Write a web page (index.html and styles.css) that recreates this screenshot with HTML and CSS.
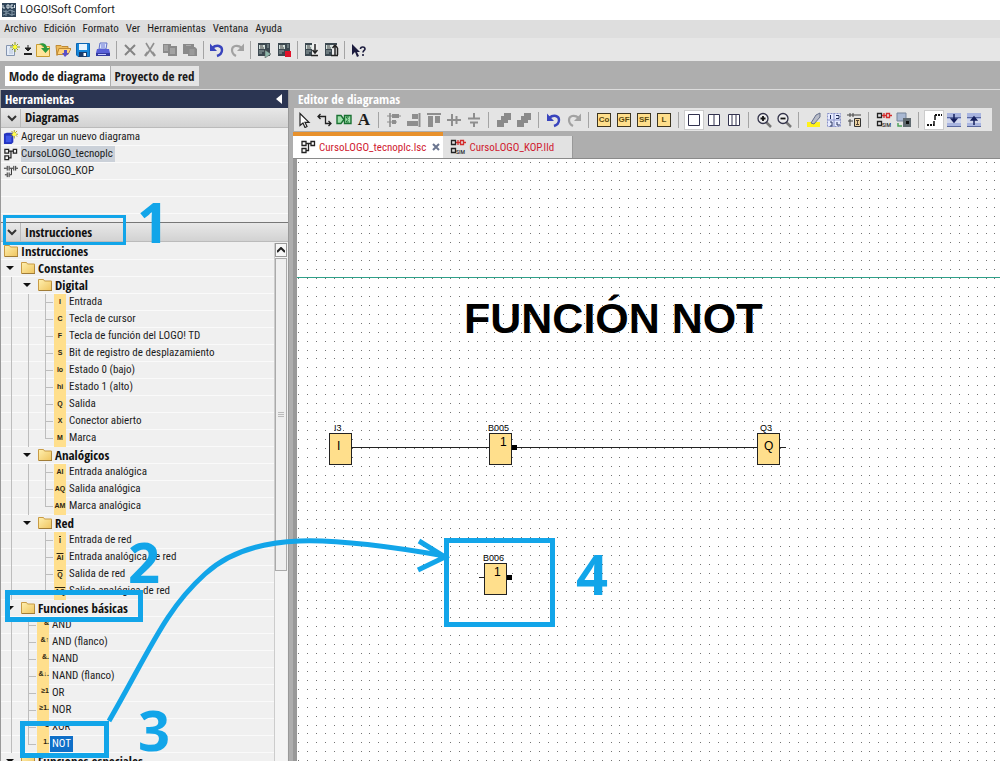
FILE: index.html
```
<!DOCTYPE html>
<html lang="es">
<head>
<meta charset="utf-8">
<title>LOGO!Soft Comfort</title>
<link rel="stylesheet" href="styles.css">
</head>
<body>
<svg class="defs" aria-hidden="true">
  <defs>
    <linearGradient id="fold" x1="0" y1="0" x2="1" y2="1"><stop offset="0" stop-color="#fff0b0"/><stop offset="1" stop-color="#efc45e"/></linearGradient>
    <symbol id="folder" viewBox="0 0 14 12"><path d="M.5 .5h5l1 1.500h7v9.500H.5z" fill="url(#fold)" stroke="#c89b45"/><path d="M1 11.500h13v-8" fill="none" stroke="#a07c38"/></symbol>
    <symbol id="new" viewBox="0 0 16 16"><path d="M2.500 3.500h8v10h-8z" fill="#e4ecf8" stroke="#8595b0"/><path d="M5 7h4M5 9h4M5 11h4" stroke="#b4c2d8"/><path d="M11 0v10M6 5h10M8 2l6 6M14 2l-6 6" stroke="#8c9a20"/><circle cx="11" cy="5" r="2" fill="#ffff30"/></symbol>
    <symbol id="down" viewBox="0 0 10 12"><path d="M5 1v4M2 4h6L5 7z" stroke="#222" fill="#222"/><path d="M1 10h8" stroke="#222" stroke-width="2"/></symbol>
    <symbol id="open" viewBox="0 0 16 16"><path d="M1.500 2.500h5l1 2h7v10h-13z" fill="#ffe49a" stroke="#c99b32"/><path d="M4 2c5-2 8 1 8 4h3l-4.500 5L6 6h3c0-2-2-3-5-4z" fill="#2b9a3e"/></symbol>
    <symbol id="opens" viewBox="0 0 16 16"><path d="M1 3.500h5l1 1h6v2H4l-2 7z" fill="#eebc5c" stroke="#c08a35"/><path d="M4 6.500h12l-3 6H2z" fill="#ffd27a" stroke="#c08a35"/><path d="M10 15l-3-4h2V8h3v3h2z" fill="#5a50c8"/></symbol>
    <symbol id="save" viewBox="0 0 16 16"><path d="M1.500 1.500h13v13H3l-1.500-1.500z" fill="#1686d8" stroke="#0d66b4"/><path d="M4 2h8v6H4z" fill="#e8f5ff"/><path d="M4 10h8v5H4z" fill="#1a3c6c"/><path d="M8.500 11h2.500v3H8.500z" fill="#fff"/></symbol>
    <symbol id="print" viewBox="0 0 16 16"><path d="M5 1h7l-1 6H4z" fill="#dfe7ff" stroke="#5f70c8"/><path d="M6 3h4M6 5h4" stroke="#6775d0"/><path d="M2 7h12l1 4H1z" fill="#5960d8"/><path d="M1 11h14v3H1z" fill="#343aa0"/><path d="M3 12.500h8" stroke="#c6cbff"/></symbol>
    <symbol id="del" viewBox="0 0 16 16"><path d="M3 3l10 10M13 3L3 13" stroke="#848484" stroke-width="2"/></symbol>
    <symbol id="cut" viewBox="0 0 16 16"><path d="M4 1l6 10M12 1L6 11" stroke="#8f8f8f" stroke-width="1.600"/><path d="M6 10l-3 4M10 10l3 4" fill="none" stroke="#8f8f8f" stroke-width="2.500"/></symbol>
    <symbol id="copy" viewBox="0 0 16 16"><path d="M1 2h8v9H1zM6 4h9v10H6z" fill="#8a8a8a"/><path d="M2 4h4M2 6h4M2 8h4M8 7h5M8 9h5M8 11h5" stroke="#bbb"/></symbol>
    <symbol id="paste" viewBox="0 0 16 16"><path d="M1 2h11v10H1zM6 5h7l2 2v7H6z" fill="#8a8a8a"/><path d="M7.500 8h5M7.500 10h5M7.500 12h5M4 3.500h5" stroke="#aaa"/></symbol>
    <symbol id="undo" viewBox="0 0 16 16"><path d="M3 6c5-4 10-2 10 2 0 3-2 5-5 6" fill="none" stroke="#3944bd" stroke-width="2.400"/><path d="M1 1.500V9h7z" fill="#3944bd"/></symbol>
    <symbol id="redo" viewBox="0 0 16 16"><path d="M13 6C8 2 3 4 3 8c0 3 2 5 4 6" fill="none" stroke="#a2a2a2" stroke-width="2.200"/><path d="M15 1.500V9H8z" fill="#a2a2a2"/></symbol>
    <symbol id="plc" viewBox="0 0 16 16"><path d="M2 1h12v13H2z" fill="#3c4850"/><path d="M3 3h6v4H3z" fill="#d3e0dc"/><path d="M4 4h3M4 6h4" stroke="#444"/><path d="M3 9h5M3 11h3M11 3h2M11 5h2" stroke="#9cabab"/></symbol>
    <symbol id="start" viewBox="0 0 16 16"><use href="#plc"/><path d="M9 8l6 4-6 4z" fill="#8fb7ab" stroke="#555" stroke-width=".5"/></symbol>
    <symbol id="stop" viewBox="0 0 16 16"><use href="#plc"/><path d="M9 9h6v6H9z" fill="#e0122a"/></symbol>
    <symbol id="todev" viewBox="0 0 16 16"><use href="#plc"/><path d="M9 1h6v13H9z" fill="#eee"/><path d="M12 2v8M9.500 8l2.500 3 2.500-3M8 13.500h7" stroke="#222" stroke-width="1.500" fill="none"/></symbol>
    <symbol id="fromdev" viewBox="0 0 16 16"><use href="#plc"/><path d="M9 3h6v11H9z" fill="#eee"/><path d="M12 13V4M9.500 6L12 3l2.500 3M8 13.500h7M14.500 6v7" stroke="#222" stroke-width="1.500" fill="none"/></symbol>
    <symbol id="help" viewBox="0 0 16 16"><path d="M2 2v11l3-3 2 5 2-1-2-4h3z" fill="#1c1c3e"/><path d="M10.500 7c0-3 4.500-2.500 4.500 0 0 1.500-2 1.500-2 3.500M13 12v2" fill="none" stroke="#1c1c3e" stroke-width="1.600"/></symbol>
    <symbol id="pointer" viewBox="0 0 16 16"><path d="M4 1.500v12L7 11l2 4.500 2-1-2-4.200h4z" fill="#fff" stroke="#222" stroke-width="1.200"/></symbol>
    <symbol id="wire" viewBox="0 0 16 16"><path d="M2 4.500h7.500v7H15M4.500 2L2 4.500 4.500 7M12.500 9l2.500 2.500-2.500 2.500" stroke="#222" stroke-width="1.300" fill="none"/></symbol>
    <symbol id="dx" viewBox="0 0 16 16"><path d="M1 3.500h4l3 4-3 4H1zM8.500 3.500H15v8H8.500z" fill="#9fe0ab" stroke="#1a7132" stroke-width="1.400"/><path d="M13 5h-3l2 2.500-2 2.500h3" stroke="#1a7132" fill="none"/></symbol>
    <symbol id="al" viewBox="0 0 16 16"><path d="M4 1v14" stroke="#8e8e8e" stroke-width="1.600"/><path d="M1 4h14M1 10h10" stroke="#8e8e8e"/><path d="M6 2h7v4H6zM6 8h4v4H6z" fill="#8e8e8e"/></symbol>
    <symbol id="ar" viewBox="0 0 16 16"><path d="M13.500 1v14" stroke="#8e8e8e" stroke-width="2"/><path d="M6 2h6v5H6zM1 9h11v5H1z" fill="#8e8e8e"/></symbol>
    <symbol id="at" viewBox="0 0 16 16"><path d="M1 2h14" stroke="#8e8e8e" stroke-width="2"/><path d="M2 4h5v11H2zM9 4h5v7H9z" fill="#8e8e8e"/></symbol>
    <symbol id="ah" viewBox="0 0 16 16"><path d="M1 8h14M6 2v12M10.500 4v8" stroke="#8e8e8e" stroke-width="2"/></symbol>
    <symbol id="av" viewBox="0 0 16 16"><path d="M8 1v5M8 10v5M2 6.500h12M4 10.500h8" stroke="#8e8e8e" stroke-width="2"/></symbol>
    <symbol id="front" viewBox="0 0 16 16"><path d="M8 1h7v7H8zM5 4h7v7H5zM1 8h7v7H1z" fill="#8a8a8a"/></symbol>
    <symbol id="w1" viewBox="0 0 16 16"><path d="M2.500 2.500h11v11h-11z" fill="#fff" stroke="#32324e"/></symbol>
    <symbol id="w2" viewBox="0 0 16 16"><path d="M2.500 2.500h11v11h-11zM8 2v12" fill="#fff" stroke="#32324e"/></symbol>
    <symbol id="w3" viewBox="0 0 16 16"><path d="M2.500 2.500h11v11h-11zM6 2v12M10 2v12" fill="#fff" stroke="#32324e"/></symbol>
    <symbol id="zin" viewBox="0 0 16 16"><path d="M10 10l5 5" stroke="#777" stroke-width="2.500"/><circle cx="7" cy="6.500" r="5" fill="#eee" stroke="#33334a" stroke-width="1.300"/><path d="M4.500 6.500h5M7 4v5" stroke="#111" stroke-width="1.800"/></symbol>
    <symbol id="zout" viewBox="0 0 16 16"><path d="M10 10l5 5" stroke="#777" stroke-width="2.500"/><circle cx="7" cy="6.500" r="5" fill="#eee" stroke="#33334a" stroke-width="1.300"/><path d="M4.500 6.500h5" stroke="#111" stroke-width="1.800"/></symbol>
    <symbol id="mark" viewBox="0 0 16 16"><path d="M1 10h13v5H1z" fill="#fff21a"/><path d="M5 11l5-8 4-2v4l-6 7z" fill="#b8bcc8" stroke="#66708c"/></symbol>
    <symbol id="pages" viewBox="0 0 16 16"><path d="M1.500 1.500h13v13h-13z" fill="#e6ebff" stroke="#8a93c8" stroke-dasharray="2 1"/><path d="M8 1v14M1 8h14" stroke="#8a93c8"/><path d="M4.500 3v4M10 3.500h3v3h-3M4 10h2v4H4M11 10v3h3" stroke="#25305e" fill="none"/></symbol>
    <symbol id="conv" viewBox="0 0 16 16"><path d="M1 3h14M4 1v4M7 1v4M2 9h5M4 7v7" stroke="#444"/><path d="M8.500 6.500h6v8h-6z" fill="#edd3a2" stroke="#333"/><path d="M11.500 8v5M10 8.500h3M10 12.500h3" stroke="#543"/></symbol>
    <symbol id="fbd" viewBox="0 0 16 16"><path d="M2 2.500h4v4H2zM2 9.500h4v4H2zM11 2.500h3.500v4H11zM6 4.500h5M6 11.500h2.500v-7" fill="none" stroke="#222" stroke-width="1.300"/></symbol>
    <symbol id="lad" viewBox="0 0 16 16"><path d="M1 4.500h3M4.500 2v5M6.500 2v5M7 4.500h4M11.500 2v5M13.500 2v5M14 4.500h2M9 5v6.500H7M2 11.500h2M4.500 9v5M6.500 9v5" stroke="#222" fill="none"/></symbol>
    <symbol id="sim" viewBox="0 0 16 16"><path d="M1.500 1.500h4v4h-4zM1.500 9.500h4v4h-4z" fill="none" stroke="#222" stroke-width="1.300"/><path d="M6 3.500h4M14 3.500h2M8 1v5M10.500 1.500h3v4h-3z" stroke="#d22c2c" stroke-width="1.300" fill="none"/><text x="6" y="15" font-size="6">SIM</text></symbol>
    <symbol id="net" viewBox="0 0 16 16"><path d="M1 1h9v8H1z" fill="#a9b8d2" stroke="#76859b"/><path d="M7 6h8v9H7z" fill="#606a70"/><path d="M10 9h3v3h-3z" fill="#111"/><path d="M2 11v3h4" stroke="#4fa35b" fill="none" stroke-width="1.500"/></symbol>
    <symbol id="ref" viewBox="0 0 16 16"><path d="M1 13h7" stroke="#111" stroke-width="2" stroke-dasharray="2 1"/><path d="M8 14V9M9 8V3" stroke="#111" stroke-width="1.500"/><path d="M9 3h7" stroke="#111" stroke-width="2" stroke-dasharray="2 1"/></symbol>
    <symbol id="dn" viewBox="0 0 16 16"><path d="M1 1h14v14H1z" fill="#a9b5e0"/><path d="M1 7h14v4H1z" fill="#d2d8ee"/><path d="M1 14.500h14M1 5.500h14" stroke="#5968a0"/><path d="M8 2v6M5.500 7h5L8 10z" stroke="#16205e" fill="#16205e" stroke-width="1.500"/></symbol>
    <symbol id="up" viewBox="0 0 16 16"><path d="M1 1h14v14H1z" fill="#a9b5e0"/><path d="M1 7h14v4H1z" fill="#d2d8ee"/><path d="M1 14.500h14M1 5.500h14" stroke="#5968a0"/><path d="M8 13V8M5.500 8h5L8 5z" stroke="#16205e" fill="#16205e" stroke-width="1.500"/></symbol>
    <symbol id="add" viewBox="0 0 16 16"><path d="M1 4l3-1h7v10l-2 2H1z" fill="#2434c0"/><path d="M3 6h6v7H3z" fill="#3f57e8"/><path d="M12 0v9M8 4.500h8M9 1l6 6M15 1L9 7" stroke="#a89a20"/><circle cx="12" cy="4.500" r="2" fill="#ffff50"/></symbol>
    <symbol id="chev" viewBox="0 0 10 8"><path d="M1 2l4 4 4-4" fill="none" stroke="#333" stroke-width="2"/></symbol>
    <symbol id="tri" viewBox="0 0 8 8"><path d="M0 2h8L4 6z" fill="#111"/></symbol>
    <symbol id="logo" viewBox="0 0 14 14"><path d="M0 0h14v14H0z" fill="#31465a"/><path d="M1 2v3h2M5 2h2v3H5zM9 2h2M9 2v3h2V4M12.500 2v3" stroke="#dfe8ee" fill="none"/><path d="M1 8l4 1 3-2 5 2M1 12l5-2 3 2 4-1M4 7v6M10 7v6" stroke="#8296a6" fill="none"/></symbol>
  </defs>
</svg>

<div class="app">
  <header class="titlebar"><svg width="14" height="14"><use href="#logo"/></svg><span>LOGO!Soft Comfort</span></header>
  <nav class="menu">
    <button>Archivo</button><button>Edición</button><button>Formato</button><button>Ver</button><button>Herramientas</button><button>Ventana</button><button>Ayuda</button>
  </nav>
  <div class="toolbar">
    <button aria-label="Nuevo"><svg><use href="#new"/></svg></button><button class="slim" aria-label="Más"><svg><use href="#down"/></svg></button><button aria-label="Abrir"><svg><use href="#open"/></svg></button><button aria-label="Abrir carpeta"><svg><use href="#opens"/></svg></button><button aria-label="Guardar"><svg><use href="#save"/></svg></button><button aria-label="Imprimir"><svg><use href="#print"/></svg></button><i class="sep"></i>
    <button aria-label="Borrar"><svg><use href="#del"/></svg></button><button aria-label="Cortar"><svg><use href="#cut"/></svg></button><button aria-label="Copiar"><svg><use href="#copy"/></svg></button><button aria-label="Pegar"><svg><use href="#paste"/></svg></button><i class="sep"></i>
    <button aria-label="Deshacer"><svg><use href="#undo"/></svg></button><button aria-label="Rehacer"><svg><use href="#redo"/></svg></button><i class="sep"></i>
    <button aria-label="Iniciar"><svg><use href="#start"/></svg></button><button aria-label="Parar"><svg><use href="#stop"/></svg></button><i class="sep"></i>
    <button aria-label="Transferir a LOGO!"><svg><use href="#todev"/></svg></button><button aria-label="Transferir a PC"><svg><use href="#fromdev"/></svg></button><i class="sep"></i>
    <button aria-label="Ayuda contextual"><svg><use href="#help"/></svg></button>
  </div>
  <div class="modes"><button class="mode on">Modo de diagrama</button><button class="mode">Proyecto de red</button></div>

  <main class="main">
    <aside class="side">
      <h2 class="panel-title"><span>Herramientas</span><svg width="6" height="10"><path d="M6 0v10L0 5z" fill="#fff"/></svg></h2>
      <button class="section"><span class="chev"><svg width="10" height="8"><use href="#chev"/></svg></span>Diagramas</button>
      <ul class="files">
        <li><svg><use href="#add"/></svg><span>Agregar un nuevo diagrama</span></li>
        <li><svg><use href="#fbd"/></svg><span class="picked">CursoLOGO_tecnoplc</span></li>
        <li><svg><use href="#lad"/></svg><span>CursoLOGO_KOP</span></li>
        <li></li><li></li><li></li>
      </ul>
      <button class="section low"><span class="chev"><svg width="10" height="8"><use href="#chev"/></svg></span>Instrucciones</button>
      <div class="treewrap">
        <ul class="tree">
          <li class="b"><svg class="fo"><use href="#folder"/></svg>Instrucciones</li>
          <li class="b"><i class="ar"><svg><use href="#tri"/></svg></i><svg class="fo"><use href="#folder"/></svg>Constantes</li>
          <li class="b"><i class="g"></i><i class="ar"><svg><use href="#tri"/></svg></i><svg class="fo"><use href="#folder"/></svg>Digital</li>
          <li><i class="g"></i><i class="g"></i><i class="g e"></i><b>I</b>Entrada</li>
          <li><i class="g"></i><i class="g"></i><i class="g e"></i><b>C</b>Tecla de cursor</li>
          <li><i class="g"></i><i class="g"></i><i class="g e"></i><b>F</b>Tecla de función del LOGO! TD</li>
          <li><i class="g"></i><i class="g"></i><i class="g e"></i><b>S</b>Bit de registro de desplazamiento</li>
          <li><i class="g"></i><i class="g"></i><i class="g e"></i><b>lo</b>Estado 0 (bajo)</li>
          <li><i class="g"></i><i class="g"></i><i class="g e"></i><b>hi</b>Estado 1 (alto)</li>
          <li><i class="g"></i><i class="g"></i><i class="g e"></i><b>Q</b>Salida</li>
          <li><i class="g"></i><i class="g"></i><i class="g e"></i><b>X</b>Conector abierto</li>
          <li><i class="g"></i><i class="g"></i><i class="g e last"></i><b>M</b>Marca</li>
          <li class="b"><i class="g"></i><i class="ar"><svg><use href="#tri"/></svg></i><svg class="fo"><use href="#folder"/></svg>Analógicos</li>
          <li><i class="g"></i><i class="g"></i><i class="g e"></i><b>AI</b>Entrada analógica</li>
          <li><i class="g"></i><i class="g"></i><i class="g e"></i><b>AQ</b>Salida analógica</li>
          <li><i class="g"></i><i class="g"></i><i class="g e last"></i><b>AM</b>Marca analógica</li>
          <li class="b"><i class="g"></i><i class="ar"><svg><use href="#tri"/></svg></i><svg class="fo"><use href="#folder"/></svg>Red</li>
          <li><i class="g"></i><i class="g none"></i><i class="g e"></i><b class="net">I</b>Entrada de red</li>
          <li><i class="g"></i><i class="g none"></i><i class="g e"></i><b class="net">AI</b>Entrada analógica de red</li>
          <li><i class="g"></i><i class="g none"></i><i class="g e"></i><b class="net">Q</b>Salida de red</li>
          <li><i class="g"></i><i class="g none"></i><i class="g e last"></i><b class="net">AQ</b>Salida analógica de red</li>
          <li class="b"><i class="ar"><svg><use href="#tri"/></svg></i><svg class="fo"><use href="#folder"/></svg>Funciones básicas</li>
          <li><i class="g"></i><i class="g e"></i><b class="fn">&amp;</b>AND</li>
          <li><i class="g"></i><i class="g e"></i><b class="fn">&amp;↑</b>AND (flanco)</li>
          <li><i class="g"></i><i class="g e"></i><b class="fn">&amp;.</b>NAND</li>
          <li><i class="g"></i><i class="g e"></i><b class="fn">&amp;↓.</b>NAND (flanco)</li>
          <li><i class="g"></i><i class="g e"></i><b class="fn">≥1</b>OR</li>
          <li><i class="g"></i><i class="g e"></i><b class="fn">≥1.</b>NOR</li>
          <li><i class="g"></i><i class="g e"></i><b class="fn">=1</b>XOR</li>
          <li><i class="g"></i><i class="g e last"></i><b class="fn">1.</b><span class="sel">NOT</span></li>
          <li class="b"><i class="ar"><svg><use href="#tri"/></svg></i><svg class="fo"><use href="#folder"/></svg>Funciones especiales</li>
        </ul>
        <div class="scroll">
          <button aria-label="Subir"><svg width="8" height="6"><path d="M0 5l4-4 4 4" fill="none" stroke="#222" stroke-width="2"/></svg></button>
          <div class="thumb"><i></i></div>
        </div>
      </div>
    </aside>

    <section class="editor">
      <h2 class="panel-title">Editor de diagramas</h2>
      <div class="toolbar tools">
        <button aria-label="Selección"><svg><use href="#pointer"/></svg></button><button aria-label="Conectar"><svg><use href="#wire"/></svg></button><button aria-label="Cortar conexión"><svg><use href="#dx"/></svg></button><button class="txt">A</button><i class="sep"></i>
        <button aria-label="Alinear a la izquierda"><svg><use href="#al"/></svg></button><button aria-label="Alinear a la derecha"><svg><use href="#ar"/></svg></button><button aria-label="Alinear arriba"><svg><use href="#at"/></svg></button><button aria-label="Centrar horizontal"><svg><use href="#ah"/></svg></button><button aria-label="Centrar vertical"><svg><use href="#av"/></svg></button><i class="sep"></i>
        <button aria-label="Al frente"><svg><use href="#front"/></svg></button><button aria-label="Al fondo"><svg><use href="#front"/></svg></button><i class="sep"></i>
        <button aria-label="Deshacer"><svg><use href="#undo"/></svg></button><button aria-label="Rehacer"><svg><use href="#redo"/></svg></button><i class="sep"></i>
        <button class="blk"><span>Co</span></button><button class="blk"><span>GF</span></button><button class="blk"><span>SF</span></button><button class="blk"><span>L</span></button><i class="sep"></i>
        <button class="down" aria-label="Una ventana"><svg><use href="#w1"/></svg></button><button aria-label="Dos ventanas"><svg><use href="#w2"/></svg></button><button aria-label="Tres ventanas"><svg><use href="#w3"/></svg></button><i class="sep"></i>
        <button aria-label="Ampliar"><svg><use href="#zin"/></svg></button><button aria-label="Reducir"><svg><use href="#zout"/></svg></button><i class="sep"></i>
        <button aria-label="Resaltar"><svg><use href="#mark"/></svg></button><button aria-label="Diseño de página"><svg><use href="#pages"/></svg></button><button aria-label="Convertir"><svg><use href="#conv"/></svg></button><i class="sep"></i>
        <button aria-label="Simulación"><svg><use href="#sim"/></svg></button><button aria-label="Test online"><svg><use href="#net"/></svg></button><i class="sep"></i>
        <button class="down" aria-label="Líneas de referencia"><svg><use href="#ref"/></svg></button><button aria-label="Bajar"><svg><use href="#dn"/></svg></button><button aria-label="Subir"><svg><use href="#up"/></svg></button>
      </div>
      <div class="tabs">
        <div class="tab on"><svg class="ic"><use href="#fbd"/></svg><span>CursoLOGO_tecnoplc.lsc</span><button aria-label="Cerrar"><svg width="8" height="8"><path d="M1 1l6 6M7 1L1 7" stroke="#6b7690" stroke-width="2"/></svg></button></div>
        <div class="tab"><svg class="ic"><use href="#sim"/></svg><span>CursoLOGO_KOP.lld</span></div>
      </div>
      <div class="canvas">
        <svg class="board">
          <defs>
            <pattern id="dots" x="1" y="3" width="125" height="125" patternUnits="userSpaceOnUse">
              <path id="dotrow" d="M0 .5h1m8 0h1m8 0h1m8 0h1m8 0h1m8 0h1m8 0h1m8 0h1m7 0h1m8 0h1m8 0h1m8 0h1m8 0h1m8 0h1" stroke="#737373" shape-rendering="crispEdges"/>
              <use href="#dotrow" y="9"/><use href="#dotrow" y="18"/><use href="#dotrow" y="27"/><use href="#dotrow" y="36"/><use href="#dotrow" y="45"/><use href="#dotrow" y="54"/><use href="#dotrow" y="63"/><use href="#dotrow" y="71"/><use href="#dotrow" y="80"/><use href="#dotrow" y="89"/><use href="#dotrow" y="98"/><use href="#dotrow" y="107"/><use href="#dotrow" y="116"/>
            </pattern>
          </defs>
          <rect width="100%" height="100%" fill="url(#dots)"/>
          <rect y="118" width="100%" height="1" fill="#2f9f88"/>
          <text class="big" x="167" y="174">FUNCIÓN NOT</text>
          <g class="wires"><path d="M54 288.500h139M218 288.500h243M482 288.500h7M182 418.500h6"/></g>
          <g class="blocks">
            <rect x="32.500" y="274.500" width="22" height="31"/><rect x="192.500" y="274.500" width="22" height="31"/><rect x="460.500" y="274.500" width="22" height="31"/><rect x="187.500" y="404.500" width="22" height="31"/>
          </g>
          <path d="M215 286h5v5h-5zM210 416h5v5h-5z"/>
          <g class="names"><text x="37" y="272">I3</text><text x="191" y="272">B005</text><text x="463" y="272">Q3</text><text x="186" y="402">B006</text></g>
          <g class="signs"><text x="40" y="291">I</text><text x="203" y="287">1</text><text x="467" y="291">Q</text><text x="197" y="417">1</text></g>
        </svg>
      </div>
    </section>
  </main>

  <svg class="notes">
    <path class="thin" d="M4.500 216.500h120v27H4.500z"/>
    <path d="M7.500 592.500h133v27h-133zM22.500 723.500h84v32h-84zM446.500 540.500h106v84h-106z"/>
    <path d="M109 721C150 650 165 610 205 574 C252 530 330 536 445 556M419 541l26 16-27 13"/>
    <text x="137" y="243">1</text><text x="128" y="583">2</text><text x="138" y="751">3</text><text x="576" y="595">4</text>
  </svg>
</div>
</body>
</html>
```
FILE: styles.css
```
* { box-sizing: border-box; }
body { margin: 0; font: 11px/17px "Roboto Condensed", Roboto, sans-serif; color: #1c1c1c; background: #aeaeae; }
button { margin: 0; padding: 0; border: 0; background: none; font: inherit; color: inherit; }
ul { margin: 0; padding: 0; list-style: none; }
h2 { margin: 0; }
.defs { position: absolute; width: 0; height: 0; }
.app { position: relative; display: flex; flex-direction: column; height: 100vh; overflow: hidden; }

.titlebar { display: flex; align-items: center; gap: 4px; height: 20px; padding-left: 2px; background: #fff; font: 11px/20px Roboto, sans-serif; }
.menu { display: flex; gap: 7px; height: 18px; padding-left: 4px; background: #dedede; line-height: 18px; }
.toolbar { display: flex; align-items: center; height: 23px; padding-left: 2px; background: #e6e6e6; }
.toolbar button { display: flex; align-items: center; justify-content: center; flex: none; width: 20px; height: 20px; }
.toolbar svg { width: 16px; height: 16px; flex: none; }
.toolbar .slim { width: 11px; }
.toolbar .slim svg { width: 10px; height: 12px; }
.sep { flex: none; width: 1px; height: 18px; margin: 0 3px; background: #a4a4a4; }

.modes { display: flex; align-items: flex-start; gap: 1px; height: 29px; padding: 5px 0 0 5px; background: #aeaeae; border-bottom: 1px solid #dcdcdc; }
.mode { height: 20px; padding: 0 4px; background: #e4e4e4; }
.mode.on { background: #fff; }
.mode, .panel-title, .section, .tree .b { font-family: "Open Sans Condensed", "Open Sans", sans-serif; font-weight: 700; font-size: 13px; }

.main { display: flex; flex: 1; min-height: 0; }
.side { display: flex; flex-direction: column; flex: none; width: 289px; margin-right: 4px; background: #f0f0f0; border-left: 1px solid #999; border-right: 1px solid #999; }
.panel-title { display: flex; align-items: center; justify-content: space-between; flex: none; height: 18px; padding: 0 6px 0 4px; line-height: 18px; color: #fff; background: #2b3552; }
.section { display: flex; align-items: center; flex: none; height: 20px; text-align: left; color: #111; background: linear-gradient(#e8e8e8, #d2d2d2); border-bottom: 1px solid #bbb; }
.section.low { border-top: 1px solid #777; }
.chev { display: flex; align-items: center; width: 20px; height: 18px; margin-right: 4px; padding-left: 6px; border-right: 1px solid #bbb; }
.files { flex: none; height: 94px; padding-top: 1px; overflow: hidden; }
.files li { display: flex; align-items: center; gap: 3px; height: 17px; padding-left: 2px; border-bottom: 1px solid #fafafa; line-height: 16px; }
.files svg { width: 15px; height: 15px; }
.picked { background: #cbd1d9; padding-right: 2px; }

.treewrap { display: flex; flex: 1; min-height: 0; padding-top: 1px; }
.tree { flex: 1; overflow: hidden; }
.tree li { display: flex; align-items: center; height: 17px; padding-left: 1px; line-height: 16px; white-space: nowrap; border-bottom: 1px solid #fafafa; }
.tree .b { color: #111; }
.fo { width: 14px; height: 12px; margin: 0 3px 0 2px; flex: none; }
.ar { display: flex; align-items: center; width: 17px; padding-left: 4px; flex: none; }
.ar svg { width: 8px; height: 8px; }
.g { flex: none; width: 17px; height: 17px; background: linear-gradient(#bdbdbd, #bdbdbd) 9px 0 / 1px 100% no-repeat; }
.g.e { background: linear-gradient(#bdbdbd, #bdbdbd) 9px 0 / 1px 100% no-repeat, linear-gradient(#bdbdbd, #bdbdbd) 9px 8px / 8px 1px no-repeat; }
.g.last { background: linear-gradient(#bdbdbd, #bdbdbd) 9px 0 / 1px 8px no-repeat, linear-gradient(#bdbdbd, #bdbdbd) 9px 8px / 8px 1px no-repeat; }
.g.none { background: none; }
.tree li > b { flex: none; width: 12px; height: 17px; margin: 0 3px 0 1px; background: #ffdf8c; color: #2c2410; font: 700 7px/15px "Liberation Sans", sans-serif; text-align: center; }
.tree li > b.net { line-height: 11px; padding-top: 3px; text-decoration: overline; }
.tree li > b.fn { line-height: 12px; text-align: right; }
.sel { padding: 0 2px; background: #0f6fc8; color: #fff; margin-left: -2px; }

.scroll { flex: none; width: 13px; margin-right: 1px; background: #f4f4f4; border-left: 1px solid #ccc; }
.scroll button { display: flex; align-items: center; justify-content: center; width: 12px; height: 14px; background: #f6f6f6; border: 1px solid #999; }
.thumb { display: flex; align-items: center; justify-content: center; height: 313px; margin-top: 1px; background: #efefef; border: 1px solid #aaa; }
.thumb i { width: 6px; height: 6px; background: repeating-linear-gradient(#bbb 0 1px, #eee 1px 2px); }

.editor { display: flex; flex-direction: column; flex: 1; min-width: 0; background: #aeaeae; }
.editor .panel-title { background: #aeaeae; padding-left: 5px; }
.tools { flex: none; margin: 0 8px 0 1px; padding-left: 0; background: #e4e4e4; }
.tools .sep { margin: 0 5px 0 4px; height: 16px; }
.tools .txt { font: 700 17px/20px "Liberation Serif", serif; }
.blk span { width: 14px; height: 14px; border: 1px solid #3d3520; background: #ffdf8c; color: #5b4a10; font: 700 8px/12px "Liberation Sans", sans-serif; }
.toolbar .down { background: #fff; border: 1px solid #ccc; }
.tabs { display: flex; align-items: flex-end; flex: none; height: 28px; border-bottom: 1px solid #8a8a8a; }
.tab { display: flex; align-items: center; gap: 3px; height: 22px; padding: 0 18px 0 7px; background: #e2e2e2; border-right: 1px solid #999; color: #d02030; }
.tab.on { height: 26px; padding: 0 3px 0 7px; border-right: 0; border-top: 4px solid #e8912c; background: #fff; }
.ic { width: 16px; height: 16px; }
.tab button { display: flex; margin-left: 3px; }
.canvas { flex: 1; min-height: 0; border-left: 4px solid #999; background: #fff; }
.board { display: block; width: 100%; height: 100%; font-family: "Liberation Sans", sans-serif; }
.big { font-size: 43px; font-weight: 700; fill: #000; }
.wires { fill: none; stroke: #222; }
.blocks { fill: #ffdf8c; stroke: #222; }
.names { font-size: 9px; }
.signs { font-size: 12px; }

.notes { position: absolute; inset: 0; width: 100%; height: 100%; pointer-events: none; fill: none; stroke: #12a5e9; stroke-width: 5; }
.notes .thin { stroke-width: 3; }
.notes text { fill: #12a5e9; stroke: none; font: 700 56px "Noto Sans", sans-serif; }
```
